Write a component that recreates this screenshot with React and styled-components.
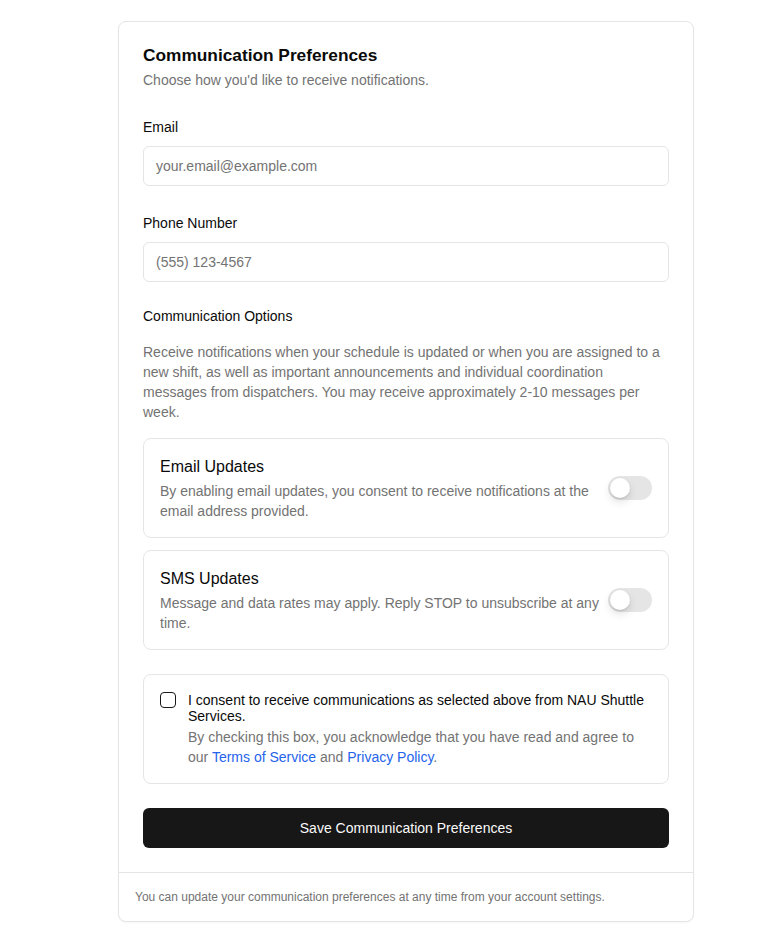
import React, { useState } from "react";
import styled, { createGlobalStyle } from "styled-components";

const GlobalStyle = createGlobalStyle`
  * {
    box-sizing: border-box;
  }

  body {
    margin: 0;
    background: #fff;
    font-family: "Liberation Sans", Arial, sans-serif;
    color: #0a0a0a;
  }
`;

const options = [
  {
    id: "email",
    title: "Email Updates",
    text: "By enabling email updates, you consent to receive notifications at the email address provided.",
  },
  {
    id: "sms",
    title: "SMS Updates",
    text: "Message and data rates may apply. Reply STOP to unsubscribe at any time.",
  },
];

const App = () => {
  const [prefs, setPrefs] = useState({ email: false, sms: false });
  const [consent, setConsent] = useState(false);

  return (
    <Page>
      <GlobalStyle />
      <Card>
        <Body>
          <Title>Communication Preferences</Title>
          <Subtitle>Choose how you'd like to receive notifications.</Subtitle>

          <Field>
            <Label htmlFor="email">Email</Label>
            <Input id="email" type="email" placeholder="your.email@example.com" />
          </Field>

          <Field>
            <Label htmlFor="phone">Phone Number</Label>
            <Input id="phone" type="tel" placeholder="(555) 123-4567" />
          </Field>

          <SectionTitle>Communication Options</SectionTitle>
          <Info>
            Receive notifications when your schedule is updated or when you are
            assigned to a new shift, as well as important announcements and
            individual coordination messages from dispatchers. You may receive
            approximately 2-10 messages per week.
          </Info>

          <OptionList>
            {options.map((opt) => (
              <Option key={opt.id}>
                <div>
                  <OptionTitle>{opt.title}</OptionTitle>
                  <OptionText>{opt.text}</OptionText>
                </div>
                <Switch
                  type="button"
                  $on={prefs[opt.id]}
                  onClick={() =>
                    setPrefs({ ...prefs, [opt.id]: !prefs[opt.id] })
                  }
                >
                  <Knob $on={prefs[opt.id]} />
                </Switch>
              </Option>
            ))}
          </OptionList>

          <Consent>
            <Check
              type="button"
              $on={consent}
              onClick={() => setConsent(!consent)}
            >
              {consent && "✓"}
            </Check>
            <div>
              <ConsentLabel>
                I consent to receive communications as selected above from NAU
                Shuttle Services.
              </ConsentLabel>
              <ConsentText>
                By checking this box, you acknowledge that you have read and
                agree to our <A href="#">Terms of Service</A> and{" "}
                <A href="#">Privacy Policy</A>.
              </ConsentText>
            </div>
          </Consent>

          <SaveButton type="button">Save Communication Preferences</SaveButton>
        </Body>
        <Footer>
          You can update your communication preferences at any time from your
          account settings.
        </Footer>
      </Card>
    </Page>
  );
};

const Page = styled.div`
  display: flex;
  justify-content: center;
  padding: 21px 0 16px 32px;
`;

const Card = styled.div`
  width: 576px;
  border: 1px solid #e5e5e5;
  border-radius: 8px;
  background: #fff;
  box-shadow: 0 1px 2px rgba(0, 0, 0, 0.04);
`;

const Body = styled.div`
  padding: 24px 24px 24px;
  display: flex;
  flex-direction: column;
`;

const Title = styled.h2`
  margin: 0;
  font-size: 17.3px;
  line-height: 18px;
  font-weight: 700;
`;

const Subtitle = styled.p`
  margin: 6px 0 0;
  font-size: 14px;
  line-height: 20px;
  color: #737373;
`;

const Field = styled.div`
  display: flex;
  flex-direction: column;
  gap: 9px;
  margin-top: 27px;

  & + & {
    margin-top: 27px;
  }
`;

const Label = styled.label`
  font-size: 14px;
  line-height: 20px;
  font-weight: 500;
`;

const Input = styled.input`
  height: 40px;
  padding: 0 12px;
  border: 1px solid #e5e5e5;
  border-radius: 6px;
  font-family: inherit;
  font-size: 14px;
  color: #0a0a0a;
  outline: none;

  &::placeholder {
    color: #737373;
  }
`;

const SectionTitle = styled.h3`
  margin: 24px 0 0;
  font-size: 14px;
  line-height: 20px;
  font-weight: 500;
`;

const Info = styled.p`
  margin: 16px 0 0;
  font-size: 14px;
  line-height: 20px;
  color: #737373;
`;

const OptionList = styled.div`
  display: flex;
  flex-direction: column;
  gap: 12px;
  margin-top: 16px;
`;

const Option = styled.div`
  display: flex;
  align-items: center;
  justify-content: space-between;
  gap: 8px;
  padding: 16px;
  border: 1px solid #e5e5e5;
  border-radius: 8px;
`;

const OptionTitle = styled.div`
  font-size: 16px;
  line-height: 24px;
`;

const OptionText = styled.div`
  margin-top: 2px;
  font-size: 14px;
  line-height: 20px;
  color: #737373;
`;

const Switch = styled.button`
  flex-shrink: 0;
  width: 44px;
  height: 24px;
  padding: 2px;
  border: none;
  border-radius: 12px;
  background: ${(p) => (p.$on ? "#171717" : "#e5e5e5")};
  cursor: pointer;
  display: flex;
  align-items: center;
`;

const Knob = styled.span`
  width: 20px;
  height: 20px;
  border-radius: 50%;
  background: #fff;
  box-shadow: 0 4px 8px rgba(0, 0, 0, 0.12), 0 1px 2px rgba(0, 0, 0, 0.1);
  transform: translateX(${(p) => (p.$on ? "20px" : "0")});
  transition: transform 0.15s;
`;

const Consent = styled.div`
  display: flex;
  align-items: flex-start;
  gap: 12px;
  margin-top: 24px;
  padding: 16px;
  border: 1px solid #e5e5e5;
  border-radius: 8px;
`;

const Check = styled.button`
  flex-shrink: 0;
  width: 16px;
  height: 16px;
  margin-top: 1px;
  padding: 0;
  border: 1px solid #171717;
  border-radius: 4px;
  background: ${(p) => (p.$on ? "#171717" : "#fff")};
  color: #fff;
  font-size: 11px;
  line-height: 14px;
  cursor: pointer;
`;

const ConsentLabel = styled.div`
  margin-top: 1px;
  font-size: 14px;
  line-height: 16px;
  font-weight: 500;
`;

const ConsentText = styled.div`
  margin-top: 3px;
  font-size: 14px;
  line-height: 20px;
  color: #737373;
`;

const A = styled.a`
  color: #2563eb;
  text-decoration: none;
`;

const SaveButton = styled.button`
  margin-top: 24px;
  height: 40px;
  border: none;
  border-radius: 6px;
  background: #171717;
  color: #fafafa;
  font-family: inherit;
  font-size: 14px;
  font-weight: 500;
  cursor: pointer;
`;

const Footer = styled.div`
  padding: 16px;
  border-top: 1px solid #e5e5e5;
  font-size: 12px;
  line-height: 16px;
  color: #737373;
`;

export default App;
